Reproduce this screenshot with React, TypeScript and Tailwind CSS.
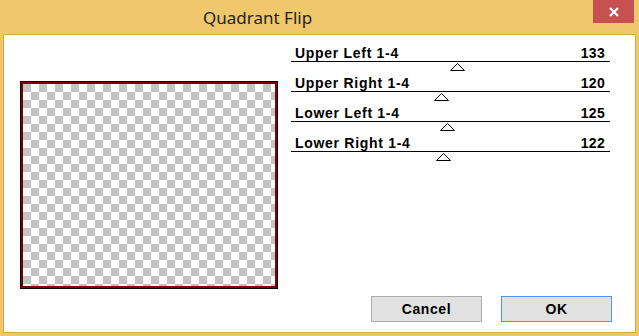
import React from "react";

const sliders = [
  { label: "Upper Left 1-4", value: 133 },
  { label: "Upper Right 1-4", value: 120 },
  { label: "Lower Left 1-4", value: 125 },
  { label: "Lower Right 1-4", value: 122 },
];

const Thumb: React.FC<{ value: number }> = ({ value }) => {
  // slider track is 0..255 over roughly 314px
  const left = 2 + (value / 255) * 314 - 7;
  return (
    <svg
      className="absolute top-[1px]"
      style={{ left }}
      width="15"
      height="8"
      viewBox="0 0 15 8"
    >
      <polygon points="7.5,0.5 14.5,7.5 0.5,7.5" fill="white" stroke="black" strokeWidth="1" />
    </svg>
  );
};

export default function App() {
  return (
    <div className="w-[639px] h-[336px] bg-[#f0c86b] flex flex-col font-['Liberation_Sans',Arial,sans-serif]">
      {/* title bar */}
      <div className="relative h-[34px] shrink-0">
        <div className="absolute left-[203px] top-[6px] text-[17px] leading-[23px] text-[#222] font-['Noto_Sans',sans-serif]">
          Quadrant Flip
        </div>
        <div className="absolute left-[593px] top-0 w-[41px] h-[23px] bg-[#c75050] flex items-center justify-center">
          <svg width="10" height="10" viewBox="0 0 10 10">
            <path d="M1 1L9 9M9 1L1 9" stroke="white" strokeWidth="2.2" />
          </svg>
        </div>
      </div>

      {/* client area */}
      <div className="mx-[3px] h-[299px] border border-[#d6aa4c] bg-white flex flex-col">
        <div className="flex">
          <div className="ml-[16px] mt-[46px] w-[258px] h-[208px] border border-black">
            <div className="w-full h-full border-2 border-[#800000]">
              <div className="w-full h-full bg-[repeating-conic-gradient(#ffffff_0%_25%,#c3c3c3_0%_50%)] bg-[length:16px_16px]" />
            </div>
          </div>

          <div className="ml-[13px] w-[319px] pt-[11px] flex flex-col">
            {sliders.map((s) => (
              <div key={s.label} className="h-[30px]">
                <div className="h-[15px] flex justify-between pl-[4px] pr-[5px] text-[14px] leading-[15px] font-bold text-black">
                  <span className="tracking-[0.7px]">{s.label}</span>
                  <span className="tracking-[0.3px]">{s.value}</span>
                </div>
                <div className="border-b border-black" />
                <div className="relative h-[14px]">
                  <Thumb value={s.value} />
                </div>
              </div>
            ))}
          </div>
        </div>

        <div className="mt-[7px] flex justify-end gap-[19px] pr-[23px]">
          <button className="w-[111px] h-[26px] bg-[#e1e1e1] border border-[#adadad] text-[14px] font-bold text-black tracking-[0.6px]">
            Cancel
          </button>
          <button className="w-[111px] h-[26px] bg-[#e1e1e1] border border-[#4c9ae6] text-[14px] font-bold text-black tracking-[0.6px]">
            OK
          </button>
        </div>
      </div>
    </div>
  );
}
